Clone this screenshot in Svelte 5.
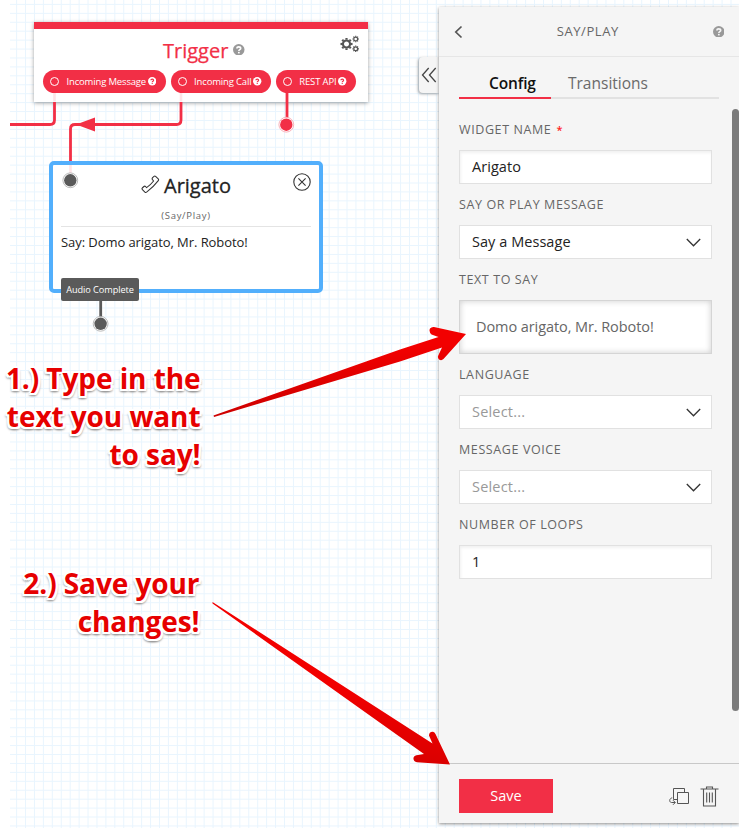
<script>
  const step = 8.93;
  const columns = Array.from({ length: 81 }, (_, i) => 16.6 + i * step);
  const rows = Array.from({ length: 93 }, (_, i) => 4.4 + i * step);

  const triggers = [
    { name: 'Incoming Message', width: 123 },
    { name: 'Incoming Call', width: 100.6 },
    { name: 'REST API', width: 80 }
  ];

  const fields = [
    { label: 'WIDGET NAME', value: 'Arigato', kind: 'input', required: true },
    { label: 'SAY OR PLAY MESSAGE', value: 'Say a Message', kind: 'select' },
    { label: 'TEXT TO SAY', value: 'Domo arigato, Mr. Roboto!', kind: 'area' },
    { label: 'LANGUAGE', value: 'Select...', kind: 'select', empty: true },
    { label: 'MESSAGE VOICE', value: 'Select...', kind: 'select', empty: true },
    { label: 'NUMBER OF LOOPS', value: '1', kind: 'input' }
  ];
</script>

{#snippet help(size, disc, mark)}
  <svg class="help" width={size} height={size} viewBox="0 0 12 12">
    <circle cx="6" cy="6" r="6" fill={disc} />
    <path d="M4.1 4.7C4.1 2.4 8 2.5 8 4.6C8 6 6.1 5.9 6.1 7.3" fill="none" stroke={mark} stroke-width="1.7" />
    <rect x="5.2" y="8.2" width="1.8" height="1.6" fill={mark} />
  </svg>
{/snippet}

{#snippet gear(x, y, r, hole, w)}
  <g transform="translate({x} {y})" stroke="#555" fill="none">
    <circle r={(r + hole) / 2} stroke-width={r - hole} />
    {#each [0, 45, 90, 135, 180, 225, 270, 315] as angle}
      <path d="M0 {-r + 0.3}V{-r - w * 0.65}" stroke-width={w} transform="rotate({angle})" />
    {/each}
  </g>
{/snippet}

<div class="page">
  <svg class="grid" width="739" height="828">
    {#each columns as x}<path d="M{x} 0V828" />{/each}
    {#each rows as y}<path d="M10 {y}H739" />{/each}
  </svg>

  <main class="canvas">
    <section class="trigger">
      <svg class="gears" width="20" height="18" viewBox="0 0 20 18">
        {@render gear(6.5, 9, 4.6, 2.5, 2.2)}
        {@render gear(15.7, 4, 2.5, 1.3, 1.2)}
        {@render gear(15.7, 13.8, 2.5, 1.3, 1.2)}
      </svg>
      <h1><span>Trigger</span>{@render help(11.5, '#999', '#fff')}</h1>
      <div class="pills">
        {#each triggers as t}
          <div class="pill" style="width:{t.width}px">
            <i></i><span>{t.name}</span>{@render help(8.4, '#fff', '#f22f46')}
          </div>
        {/each}
      </div>
    </section>

    <section class="widget">
      <header>
        <svg width="19" height="19" viewBox="0 0 19 19" fill="none" stroke="#333" stroke-width="1.05" stroke-linejoin="round">
          <path d="M11.6 2.6L13 1.3Q13.800 .6 14.600 1.400L17.200 3.900Q18 4.700 17.300 5.600Q12 12.400 5.600 17.200Q4.700 17.900 3.900 17.100L1.400 14.600Q.6 13.800 1.300 13L2.900 11.500Q3.700 10.800 4.500 11.500L5.600 12.600Q9.500 10 12.600 6L11.500 4.700Q10.700 3.700 11.600 2.600Z" />
        </svg>
        <h2>Arigato</h2>
      </header>
      <svg class="close" width="18" height="18" viewBox="0 0 18 18" fill="none" stroke="#333" stroke-width="1.1">
        <circle cx="9" cy="9" r="8.2" /><path d="M5.4 5.4L12.6 12.6M12.6 5.4L5.4 12.6" />
      </svg>
      <p class="type">(Say/Play)</p>
      <p class="summary">Say: Domo arigato, Mr. Roboto!</p>
    </section>
    <div class="exit">Audio Complete</div>

    <svg class="wires" width="439" height="340" fill="none">
      <g stroke="#f22f46" stroke-width="2.8">
        <path d="M10 124.5H50Q54.5 124.5 54.5 120V102" />
        <path d="M181 102V120Q181 124.5 176.5 124.5H75Q70.5 124.5 70.5 129V161" />
        <path d="M287 93V124" />
      </g>
      <g stroke="#fde5e8" stroke-width="2.6"><path d="M54.5 93V101.5M181 93V101.5M70.5 165V173" /></g>
      <path d="M76 124.5L95 117.5V131.5Z" fill="#f22f46" />
      <circle cx="286.3" cy="124.7" r="7.4" fill="#fff" stroke="#f8a0aa" stroke-width=".8" />
      <circle cx="286.3" cy="124.7" r="6.2" fill="#f22f46" />
      <circle cx="70.3" cy="180.3" r="7.4" fill="#fff" stroke="#aaa" stroke-width=".8" />
      <circle cx="70.3" cy="180.3" r="6.2" fill="#5a5a5a" />
      <path d="M100.7 300V320" stroke="#5a5a5a" stroke-width="2.8" />
      <circle cx="100.6" cy="323.8" r="7.4" fill="#fff" stroke="#aaa" stroke-width=".8" />
      <circle cx="100.6" cy="323.8" r="6.2" fill="#5a5a5a" />
    </svg>

    <p class="note first">1.) Type in the<br />text you want<br />to say!</p>
    <p class="note second">2.) Save your<br />changes!</p>
    <div class="collapse">
      <svg width="16" height="16" viewBox="0 0 16 16" fill="none" stroke="#444" stroke-width="1.3">
        <path d="M7.7 1L1.5 8L7.7 15M14.7 1L8.5 8L14.7 15" />
      </svg>
    </div>
  </main>

  <aside class="panel">
    <header class="bar">
      <svg width="9" height="14" viewBox="0 0 9 14" fill="none" stroke="#555" stroke-width="1.7"><path d="M7.5 1.5L1.8 7L7.5 12.5" /></svg>
      <span>SAY/PLAY</span>
      {@render help(11.5, '#999', '#f5f5f5')}
    </header>
    <nav>
      <div class="tab active"><span>Config</span></div>
      <div class="tab"><span>Transitions</span></div>
    </nav>
    <div class="form">
      {#each fields as f}
        <div class="label">{f.label}{#if f.required}<b>*</b>{/if}</div>
        <div class="control {f.kind}" class:empty={f.empty}>
          <span>{f.value}</span>
          {#if f.kind === 'select'}
            <svg width="15" height="9" viewBox="0 0 15 9" fill="none" stroke="#333" stroke-width="1.3"><path d="M.8 1L7.5 7.8L14.2 1" /></svg>
          {/if}
        </div>
      {/each}
      <div class="scroll"></div>
    </div>
    <footer>
      <button>Save</button>
      <svg class="copy" width="21" height="19" viewBox="0 0 21 19" fill="none" stroke="#555">
        <path d="M8.5 12.5H4.5V1.5H15.5V5.5M8.5 5.5H19.5V16.5H8.5Z" />
        <path d="M3.2 10.8C-.2 11.5 .2 15.5 2.5 15.5H6M4 13.2L6.3 15.5L4 17.8" />
      </svg>
      <svg width="19" height="21" viewBox="0 0 19 21" fill="none" stroke="#555" stroke-width="1.1">
        <path d="M.5 3H18.5M6.5 3V1H12.5V3M3.5 3V20H15.5V3M6.7 6.5V16.5M9.5 6.5V16.5M12.3 6.5V16.5" />
      </svg>
    </footer>
  </aside>

  <svg class="arrows" width="739" height="828">
    <defs>
      <linearGradient id="up" x1="0" y1="0" x2=".25" y2="1"><stop offset=".4" stop-color="#f20000" /><stop offset="1" stop-color="#c80000" /></linearGradient>
      <linearGradient id="down" x1=".3" y1="0" x2="0" y2="1"><stop offset=".4" stop-color="#f20000" /><stop offset="1" stop-color="#c80000" /></linearGradient>
    </defs>
    <path fill="url(#up)" d="M213.5 415.5L400 349.500L438.500 337L431.500 334.500Q428.500 331.500 430 328.500Q431.500 326.700 434 327L466 334L443.500 359Q441.500 361 439 359.500Q437 357.500 438.500 355L442 347.500L400 361.500L214 417Z" />
    <path fill="url(#down)" d="M212.5 602L432.500 743.500L429 735.500Q429 731.500 433 731.700Q434.700 732 435.500 734L450 764.500L417 762.200Q413 761.500 413.500 757.800Q414.500 755 418 755L424 754L380 722.800L212.500 603.500Z" />
  </svg>
</div>

<style>
  .page { position: relative; display: flex; width: 739px; height: 828px; overflow: hidden; background: #fff; font-family: "Open Sans", "Noto Sans", sans-serif; color: #222; }
  .page :global(svg) { display: block; flex: none; }
  .grid { position: absolute; inset: 0; stroke: #e9f5fe; stroke-width: 1; }
  .canvas { position: relative; width: 439px; }
  h1, h2, p { margin: 0; font-weight: 400; }
  .trigger { position: absolute; left: 34px; top: 22px; width: 334px; height: 80px; box-sizing: border-box; border-top: 7px solid #f22f46; background: #fff; box-shadow: 0 1px 4px rgba(0,0,0,.38); }
  .gears { position: absolute; right: 8px; top: 6px; }
  h1 { display: flex; align-items: center; height: 41px; padding: 0 0 0 129px; color: #f22f46; font-size: 20px; gap: 5px; }
  h1 span { margin-top: 1px; -webkit-text-stroke: .25px #f22f46; }
  .pills { display: flex; gap: 4.6px; padding-left: 9px; }
  .pill { display: flex; align-items: center; height: 23px; border-radius: 12px; box-sizing: border-box; padding-left: 7px; background: #f22f46; color: #fff; font-size: 9.5px; letter-spacing: -.16px; white-space: nowrap; gap: 2px; }
  .pill i { flex: none; width: 7px; height: 7px; border: 1px solid #fff; border-radius: 50%; margin-right: 5.5px; }
  .widget { position: absolute; left: 49px; top: 161px; width: 274px; height: 132px; box-sizing: border-box; border: 4px solid #52affc; border-radius: 5px; padding: 0 8px; background: #fff; }
  .widget header { display: flex; align-items: center; gap: 4px; padding: 6px 0 0 80px; height: 29px; }
  .widget header svg { margin-top: -2px; }
  h2 { margin-top: -1px; font-size: 20px; line-height: 27px; -webkit-text-stroke: .3px #222; }
  .close { position: absolute; right: 8px; top: 8px; }
  .type { height: 26px; line-height: 31px; border-bottom: 1px solid #e4e4e4; text-align: center; font-size: 9.5px; letter-spacing: .7px; color: #666; }
  .summary { padding-top: 5px; font-size: 13px; line-height: 20px; letter-spacing: -.07px; }
  .exit { position: absolute; left: 61px; top: 278px; width: 78px; height: 23px; border-radius: 2px; background: #5a5a5a; color: #fff; text-align: center; font-size: 9.2px; letter-spacing: -.08px; line-height: 23px; }
  .wires { position: absolute; left: 0; top: 0; }
  .note { position: absolute; right: 238.500px; text-align: right; white-space: nowrap; color: #e60000; font-weight: 700; font-size: 28px; line-height: 38px; letter-spacing: -.08px; text-shadow: 2px 0 #fff, -2px 0 #fff, 0 2px #fff, 0 -2px #fff, 2px 2px #fff, -2px 2px #fff, 2px -2px #fff, -2px -2px #fff, 0 3px 2px #999, 2px 3px 2px #aaa, -2px 3px 2px #aaa; }
  .first { top: 359px; }
  .second { top: 564px; right: 239.500px; }
  .collapse { position: absolute; right: 0; top: 57px; width: 20px; height: 36px; display: flex; align-items: center; padding-left: 2px; box-sizing: border-box; background: #f5f5f5; border-radius: 4px 0 0 4px; box-shadow: -1px 1px 3px rgba(0,0,0,.35); }
  .panel { position: relative; display: flex; flex-direction: column; width: 300px; height: 816px; margin-top: 7px; background: #f5f5f5; box-shadow: 0 1px 3px rgba(0,0,0,.45); }
  .bar { display: flex; align-items: center; justify-content: space-between; height: 49px; padding: 0 15px; border-bottom: 1px solid #e6e6e6; color: #666; font-size: 13px; letter-spacing: .58px; line-height: 18px; }
  .bar span { margin-top: -2px; }
  nav { display: flex; margin: 0 20px; height: 42px; font-size: 15.5px; color: #6a6a6a; }
  .tab { flex: 1; box-sizing: border-box; height: 42px; border-bottom: 2px solid #e2e2e2; padding: 14px 0 0 17px; line-height: 24px; }
  .active { flex: 0 0 92px; border-color: #f22f46; color: #111; font-weight: 600; padding-left: 30px; letter-spacing: -.15px; }
  .form { position: relative; flex: 1; padding: 10px 27px 0 20px; }
  .label { height: 41px; line-height: 42px; font-size: 12.5px; letter-spacing: .6px; color: #666; }
  .label b { margin-left: 5px; color: #f22; font-weight: 600; font-size: 11px; }
  .control { display: flex; align-items: center; justify-content: space-between; box-sizing: border-box; height: 34px; border: 1px solid #e1e1e1; padding: 0 10px 0 12px; background: #fff; font-size: 14.5px; letter-spacing: .05px; color: #222; }
  .control span { margin-top: -1px; }
  .input { box-shadow: inset 1px 2px 3px rgba(0,0,0,.06); }
  .area { height: 54px; padding-left: 16px; border-color: #d5d5d5; box-shadow: inset 0 0 6px rgba(0,0,0,.2); color: #666; letter-spacing: -.08px; }
  .empty { color: #999; letter-spacing: .2px; }
  .scroll { position: absolute; right: 0; top: 10px; width: 7px; height: 602px; border-radius: 4px; background: #7b7b7b; }
  footer { display: flex; align-items: center; height: 59px; border-top: 1px solid #c8c8c8; padding: 0 20px; }
  button { width: 94px; height: 34px; padding: 0 0 2px; margin: 5px auto 0 0; border: 0; background: #f22f46; color: #fff; font: 14.5px "Open Sans", sans-serif; }
  .copy { margin-right: 10px; }
  footer svg { margin-top: 6px; }
  .arrows { position: absolute; inset: 0; pointer-events: none; filter: drop-shadow(0 0 1px rgba(255,255,255,.8)); }
</style>
